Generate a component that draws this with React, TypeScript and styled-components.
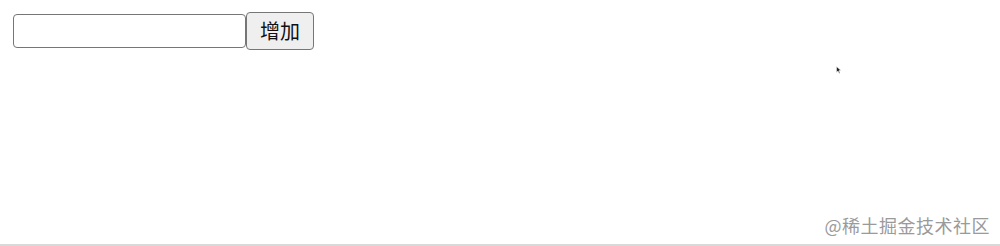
import styled, { createGlobalStyle } from "styled-components";

const GlobalStyle = createGlobalStyle`
  html, body {
    margin: 0;
    padding: 0;
    background: #ffffff;
  }
`;

const Page = styled.div`
  position: relative;
  width: 1000px;
  height: 246px;
  box-sizing: border-box;
  border-bottom: 2px solid #d9d9d9;
  display: flex;
  flex-direction: column;
  justify-content: space-between;
  font-family: "Noto Sans CJK SC", "Noto Sans", sans-serif;
`;

const Toolbar = styled.div`
  display: flex;
  align-items: center;
  padding: 12px 0 0 13px;
`;

const TextInput = styled.input`
  box-sizing: border-box;
  width: 233px;
  height: 34px;
  margin: 0;
  border: 1px solid #767676;
  border-radius: 4px;
  background: #ffffff;
  outline: none;
`;

const AddButton = styled.button`
  box-sizing: border-box;
  width: 68px;
  height: 38px;
  margin: 0;
  padding: 0;
  border: 1px solid #767676;
  border-radius: 4px;
  background: #efefef;
  color: #111;
  font-family: "Noto Sans CJK SC", sans-serif;
  font-size: 20px;
  line-height: 1;
`;

const Watermark = styled.div`
  align-self: flex-end;
  padding: 0 10px 6px 0;
  color: #9a9a9a;
  font-family: "Noto Sans CJK SC", sans-serif;
  font-size: 18px;
  letter-spacing: 0.5px;
`;

const Cursor = styled.svg`
  position: absolute;
  left: 836px;
  top: 66px;
`;

export default function App() {
  return (
    <>
      <GlobalStyle />
      <Page>
        <Toolbar>
          <TextInput type="text" />
          <AddButton>增加</AddButton>
        </Toolbar>
        <Watermark>@稀土掘金技术社区</Watermark>
        <Cursor width="6" height="8" viewBox="0 0 6 8">
          <path d="M0.5 0.5 L0.5 6.5 L2 5 L3.2 7.5 L4 7 L3 4.6 L5 4.6 Z" fill="#222" stroke="#fff" strokeWidth="0.5" />
        </Cursor>
      </Page>
    </>
  );
}
